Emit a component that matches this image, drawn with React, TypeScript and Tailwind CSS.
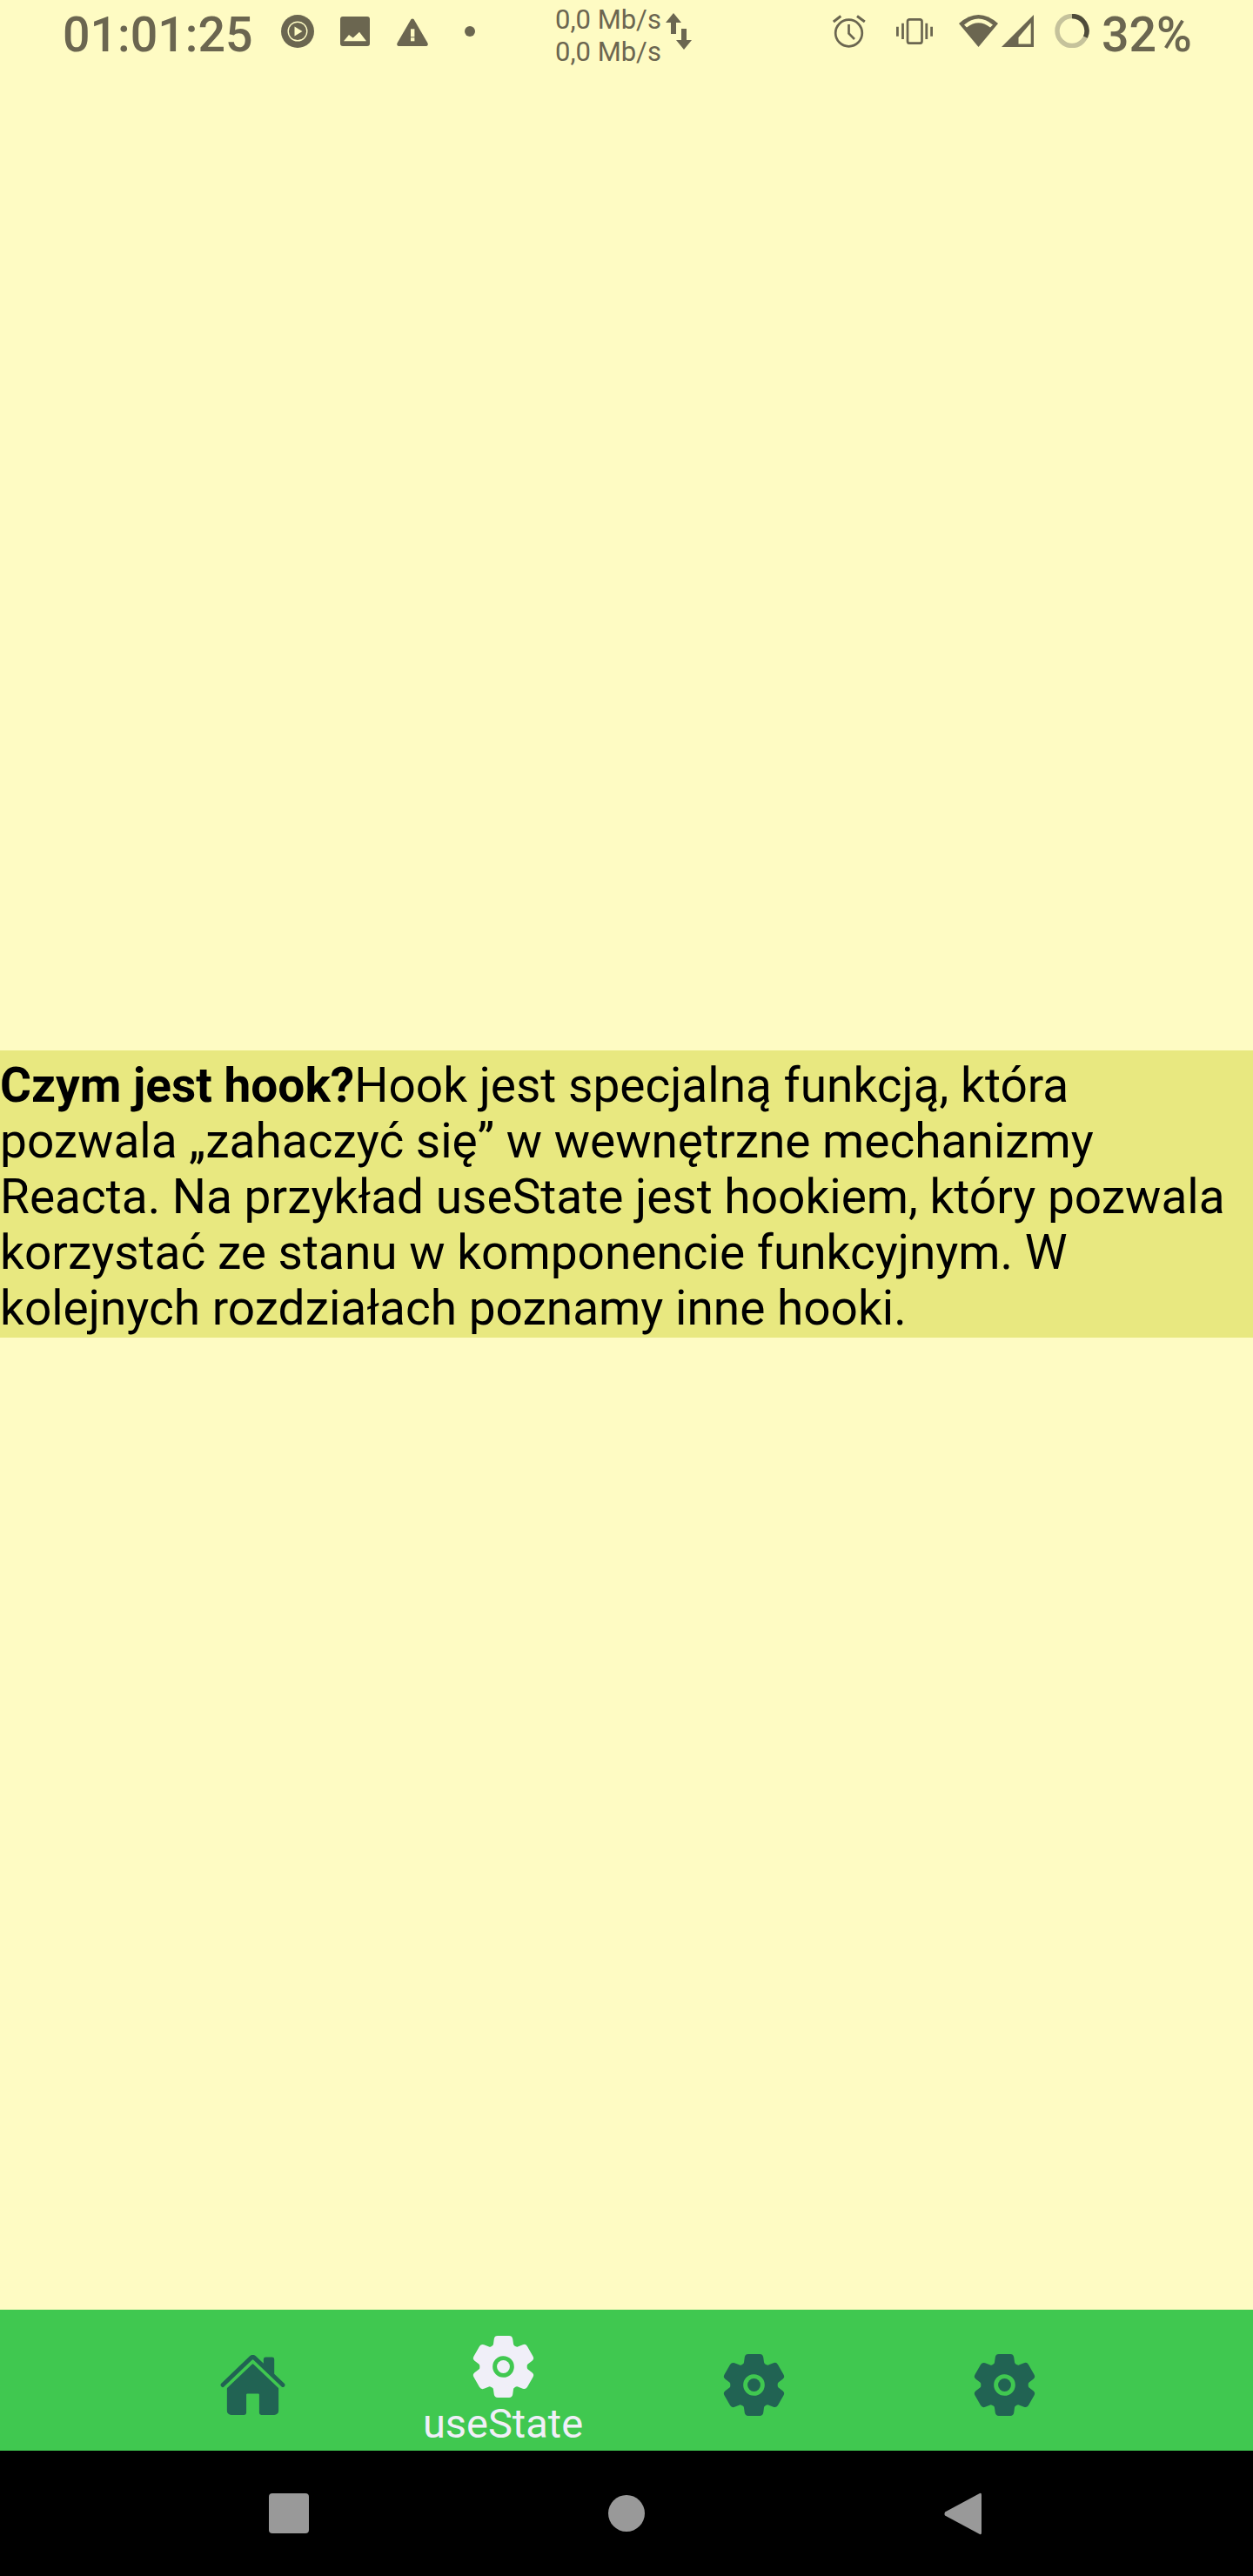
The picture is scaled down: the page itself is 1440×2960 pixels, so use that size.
import { IoHome, IoSettings } from "react-icons/io5";

const DARK = "#6b6650";
const LIGHT = "#fefbc3";

const StatusBar = () => {
  return (
    <div className="flex h-[90px] shrink-0 items-start text-[#6b6650]">
      <span className="ml-[72px] mt-[9px] w-[216px] text-[55.5px] font-medium leading-[64px]">01:01:25</span>
      <svg className="ml-[35px] mt-[17px]" width="38" height="38" viewBox="0 0 38 38">
        <circle cx="19" cy="19" r="19" fill={DARK} />
        <circle cx="19" cy="19" r="10.8" fill="none" stroke={LIGHT} strokeWidth="1.4" />
        <path d="M15.5 13.5 L24.5 19 L15.5 24.5Z" fill={LIGHT} />
      </svg>
      <svg className="ml-[30px] mt-[19px]" width="34" height="34" viewBox="0 0 34 34">
        <rect width="34" height="34" rx="3" fill={DARK} />
        <path d="M4 28.3 L10 21 L14.7 24.5 L22 17.7 L30 28.3Z" fill={LIGHT} />
      </svg>
      <svg className="ml-[31px] mt-[21px]" width="36" height="32" viewBox="0 0 36 32">
        <path d="M16.5 1 Q18 0 19.5 1 L35.5 28.5 Q36.5 32 33 32 L3 32 Q-0.5 32 0.5 28.5Z" fill={DARK} />
        <rect x="16" y="12.3" width="4.4" height="9" fill={LIGHT} />
        <rect x="16" y="22.3" width="4.4" height="4" fill={LIGHT} />
      </svg>
      <div className="ml-[42px] mt-[30px] h-[12px] w-[12px] rounded-full bg-[#6b6650]" />
      <div className="ml-[92px] mt-[4px] w-[124px] text-[31px] leading-[37px]">
        <div>0,0 Mb/s</div>
        <div>0,0 Mb/s</div>
      </div>
      <svg className="ml-[3px] mt-[15px]" width="30" height="42" viewBox="0 0 30 42">
        <path d="M9 0 L18 11 L12 11 L12 24 L6 24 L6 11 L0 11Z" fill={DARK} />
        <path d="M21 42 L30 31 L24 31 L24 18 L18 18 L18 31 L12 31Z" fill={DARK} />
      </svg>
      <svg className="ml-[162px] mt-[17px]" width="38" height="38" viewBox="0 0 38 38">
        <circle cx="18.5" cy="21" r="15.3" fill="none" stroke={DARK} strokeWidth="2.7" />
        <path d="M18.5 11 V21.5 L25 28" fill="none" stroke={DARK} strokeWidth="2.7" />
        <path d="M0.8 8 L9.3 1.5 M36.8 8 L28 1.5" fill="none" stroke={DARK} strokeWidth="3" />
      </svg>
      <svg className="ml-[35px] mt-[21px]" width="42" height="30" viewBox="0 0 42 30">
        <rect x="13" y="1.3" width="16.5" height="27.4" rx="2.5" fill="none" stroke={DARK} strokeWidth="2.7" />
        <path d="M7.5 5.7 V24 M1.4 9.7 V20.7 M34.8 5.7 V24 M40.6 9.7 V20.7" fill="none" stroke={DARK} strokeWidth="2.8" />
      </svg>
      <svg className="ml-[30px] mt-[16px]" width="45" height="38" viewBox="0 0 45 38">
        <path d="M22.5 38 L0 11 Q22.5 -9 45 11Z" fill={DARK} />
        <path d="M6 12.5 Q22.5 -1.5 39 12.5 L36 15.5 Q22.5 5 9 15.5Z" fill={LIGHT} />
      </svg>
      <svg className="ml-[4px] mt-[17px]" width="37" height="37" viewBox="0 0 37 37">
        <path d="M37 0 V37 H0Z" fill={DARK} />
        <path d="M33.7 9.3 V33.5 H19.5 V26Z" fill={LIGHT} />
      </svg>
      <svg className="ml-[24px] mt-[16px]" width="40" height="39" viewBox="0 0 40 39">
        <circle cx="20" cy="19.5" r="17" fill="none" stroke="#c5c29b" strokeWidth="5.4" />
        <path d="M20 2.5 A17 17 0 0 1 35.4 26.7" fill="none" stroke="#4f4c3a" strokeWidth="5.4" />
      </svg>
      <span className="ml-[14px] mt-[9px] text-[55.5px] font-medium leading-[64px]">32%</span>
    </div>
  );
};

const tabs = [
  { key: "home", label: "", icon: "home" },
  { key: "useState", label: "useState", icon: "gear" },
  { key: "a", label: "", icon: "gear" },
  { key: "b", label: "", icon: "gear" },
];

export default function App() {
  return (
    <div className="flex h-[2960px] flex-col bg-[#fefbc3] font-['Roboto',sans-serif]">
      <StatusBar />
      <div className="flex flex-1 flex-col justify-center">
        <p className="bg-[#e8e880] pb-[2px] pt-[8px] text-[55px] leading-[64px] text-black">
          <strong className="font-bold">Czym jest hook?</strong>
          Hook jest specjalną funkcją, która pozwala „zahaczyć się” w wewnętrzne mechanizmy Reacta. Na przykład
          useState jest hookiem, który pozwala korzystać ze stanu w komponencie funkcyjnym. W kolejnych rozdziałach
          poznamy inne hooki.
        </p>
      </div>
      <div className="grid h-[162px] shrink-0 grid-cols-4 bg-[#40c850] pl-[146px] pr-[142px]">
        {tabs.map((tab) => {
          const active = tab.label !== "";
          const Icon = tab.icon === "home" ? IoHome : IoSettings;
          return (
            <div key={tab.key} className={active ? "flex flex-col items-center pt-[26px]" : "flex flex-col items-center pt-[47px]"}>
              <Icon size={79} color={active ? "#f0eff8" : "#216353"} />
              {active && <span className="text-[47px] leading-[51px] text-[#f0eff8]">{tab.label}</span>}
            </div>
          );
        })}
      </div>
      <div className="flex h-[144px] shrink-0 items-center gap-[344px] bg-black pl-[309px]">
        <div className="h-[46px] w-[46px] rounded-[4px] bg-[#999999]" />
        <div className="h-[42px] w-[42px] rounded-full bg-[#999999]" />
        <svg width="43" height="49" viewBox="0 0 43 49">
          <path d="M41 1 Q43 0 43 3 V46 Q43 49 41 48 L1 26.5 Q0 24.5 1 22.5Z" fill="#999999" />
        </svg>
      </div>
    </div>
  );
}
